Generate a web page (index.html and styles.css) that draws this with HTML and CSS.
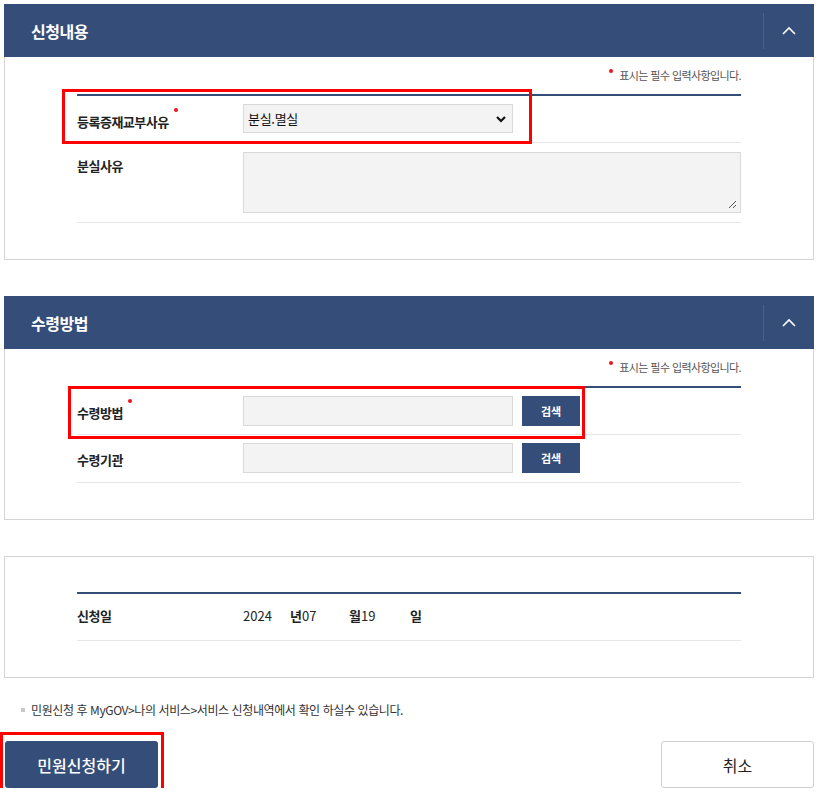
FILE: index.html
```html
<!DOCTYPE html>
<html lang="ko">
<head>
<meta charset="utf-8">
<link rel="stylesheet" href="styles.css">
</head>
<body>
<div class="wrap">
  <section class="panel">
    <div class="panel-head">
      <h2 class="panel-title">신청내용</h2>
      <button class="toggle" type="button" aria-label="접기">
        <svg width="14" height="9" viewBox="0 0 14 9"><path d="M1 8 L7 2 L13 8" fill="none" stroke="#fff" stroke-width="1.6"/></svg>
      </button>
    </div>
    <div class="panel-body">
      <p class="req-note"><span class="dot"></span>표시는 필수 입력사항입니다.</p>
      <div class="form">
        <div class="row row-select">
          <div class="label">등록증재교부사유<span class="dot dot-label"></span></div>
          <div class="field">
            <div class="select">
              <span>분실.멸실</span>
              <svg width="12" height="8" viewBox="0 0 12 8"><path d="M2 2 L6 6 L10 2" fill="none" stroke="#111" stroke-width="2.2"/></svg>
            </div>
          </div>
          <div class="mark mark-1"></div>
        </div>
        <div class="row row-text">
          <div class="label">분실사유</div>
          <div class="field">
            <div class="textarea">
              <svg class="grip" width="9" height="9" viewBox="0 0 9 9"><path d="M8 1 L1 8 M8 5 L5 8" stroke="#555" stroke-width="1"/></svg>
            </div>
          </div>
        </div>
      </div>
    </div>
  </section>

  <section class="panel">
    <div class="panel-head">
      <h2 class="panel-title">수령방법</h2>
      <button class="toggle" type="button" aria-label="접기">
        <svg width="14" height="9" viewBox="0 0 14 9"><path d="M1 8 L7 2 L13 8" fill="none" stroke="#fff" stroke-width="1.6"/></svg>
      </button>
    </div>
    <div class="panel-body">
      <p class="req-note"><span class="dot"></span>표시는 필수 입력사항입니다.</p>
      <div class="form">
        <div class="row row-input row-first">
          <div class="label">수령방법<span class="dot dot-label"></span></div>
          <div class="field field-inline">
            <div class="input"></div>
            <button class="btn-search" type="button">검색</button>
          </div>
          <div class="mark mark-2"></div>
        </div>
        <div class="row row-input">
          <div class="label">수령기관</div>
          <div class="field field-inline">
            <div class="input"></div>
            <button class="btn-search" type="button">검색</button>
          </div>
        </div>
      </div>
    </div>
  </section>

  <section class="panel panel-plain">
    <div class="panel-body">
      <div class="form">
        <div class="row row-date">
          <div class="label">신청일</div>
          <div class="field date">
            <span class="d-year">2024</span><b class="d-unit">년</b><span class="d-val d-month">07</span><b class="d-unit">월</b><span class="d-val d-day">19</span><b class="d-unit">일</b>
          </div>
        </div>
      </div>
    </div>
  </section>

  <p class="info"><span class="sq"></span>민원신청 후 MyGOV&gt;나의 서비스&gt;서비스 신청내역에서 확인 하실수 있습니다.</p>

  <div class="actions">
    <div class="submit-wrap">
      <button class="btn-submit" type="button">민원신청하기</button>
      <div class="mark mark-3"></div>
    </div>
    <button class="btn-cancel" type="button">취소</button>
  </div>
</div>
</body>
</html>
```

FILE: styles.css
```css
* { box-sizing: border-box; }
html, body { margin: 0; padding: 0; background: #fff; }
body {
  font-family: "Noto Sans CJK KR", "Noto Sans", sans-serif;
  color: #222;
  width: 819px;
}
.wrap {
  padding: 4px 5px 0 4px;
}
.panel {
  border: 1px solid #d4d4d4;
  margin-bottom: 36px;
}
.panel-head {
  height: 53px;
  margin: -1px -1px 0 -1px;
  background: #344d79;
  display: flex;
  align-items: center;
  justify-content: space-between;
  padding-left: 27px;
}
.panel-title {
  margin: 0;
  color: #fff;
  font-size: 16px;
  font-weight: 700;
  letter-spacing: -0.5px;
}
.toggle {
  width: 51px;
  height: 36px;
  border: 0;
  border-left: 1px solid #4a628c;
  background: transparent;
  display: flex;
  align-items: center;
  justify-content: center;
  padding: 0;
}
.panel-body {
  padding: 9px 72px 36px 72px;
}
.req-note {
  margin: 0;
  height: 28px;
  font-size: 11px;
  color: #555;
  letter-spacing: -0.6px;
  text-align: right;
  line-height: 18px;
}
.req-note .dot {
  position: relative;
  top: -7px;
  margin-right: 6px;
}
.dot {
  display: inline-block;
  width: 4px;
  height: 4px;
  border-radius: 50%;
  background: #e8161b;
}
.dot-label {
  position: relative;
  top: -15px;
  left: 5px;
}
.form {
  border-top: 2px solid #344d79;
}
.row {
  position: relative;
  display: grid;
  grid-template-columns: 166px 1fr;
  border-bottom: 1px solid #e6e6e6;
}
.label {
  font-size: 13px;
  font-weight: 700;
  color: #222;
  letter-spacing: -0.5px;
}
.row-select { padding: 8px 0 9px; align-items: center; }
.row-select .label { padding-top: 6px; }
.select {
  width: 270px;
  height: 29px;
  background: #f3f3f3;
  border: 1px solid #d9d9d9;
  display: flex;
  align-items: center;
  justify-content: space-between;
  padding: 0 5px 0 4px;
  font-size: 13px;
  color: #111;
  letter-spacing: -0.3px;
}
.row-text { padding: 9px 0 9px; }
.row-text .label { padding-top: 4px; }
.textarea {
  position: relative;
  height: 61px;
  background: #f3f3f3;
  border: 1px solid #d9d9d9;
}
.grip { position: absolute; right: 3px; bottom: 3px; }
.row-input { padding: 8px 0 9px; align-items: center; }
.row-input.row-first { padding-bottom: 8px; }
.row-input .label { padding-top: 2px; }
.field-inline { display: flex; gap: 9px; }
.input {
  width: 270px;
  height: 30px;
  background: #f3f3f3;
  border: 1px solid #d9d9d9;
}
.btn-search {
  width: 58px;
  height: 30px;
  border: 0;
  background: #344d79;
  color: #fff;
  font-family: inherit;
  font-size: 11px;
  font-weight: 700;
  padding: 0;
}
.panel-plain { margin-bottom: 0; }
.panel-plain .panel-body { padding-top: 35px; }
.row-date { padding: 13px 0 15px; align-items: center; line-height: 18px; }
.date { font-size: 13px; color: #222; display: flex; align-items: baseline; }
.d-year { width: 47px; }
.d-unit { font-weight: 700; }
.d-month { width: 47px; }
.d-day { width: 49px; }
.mark {
  position: absolute;
  border: 3px solid #f00;
  pointer-events: none;
}
.mark-1 { left: -15px; top: -7px; width: 470px; height: 55px; }
.mark-2 { left: -9px; top: -2px; width: 517px; height: 53px; }
.info {
  margin: 23px 0 0 0;
  font-size: 12px;
  color: #333;
  letter-spacing: -0.4px;
  padding-left: 17px;
  height: 18px;
  line-height: 18px;
  display: flex;
  align-items: center;
}
.sq {
  display: inline-block;
  width: 4px;
  height: 4px;
  background: #c8c8c8;
  margin-right: 6px;
}
.actions {
  display: flex;
  justify-content: space-between;
  align-items: flex-start;
  padding-top: 22px;
}
.submit-wrap { position: relative; }
.btn-submit {
  display: block;
  width: 153px;
  height: 47px;
  margin-left: 1px;
  border: 0;
  border-radius: 3px;
  background: #344d79;
  color: #fff;
  font-family: inherit;
  font-size: 16px;
  font-weight: 500;
}
.mark-3 { left: -4px; top: -9px; width: 164px; height: 60px; }
.btn-cancel {
  width: 153px;
  height: 47px;
  border: 1px solid #cfcfcf;
  border-radius: 3px;
  background: #fff;
  color: #222;
  font-family: inherit;
  font-size: 16px;
}
```
